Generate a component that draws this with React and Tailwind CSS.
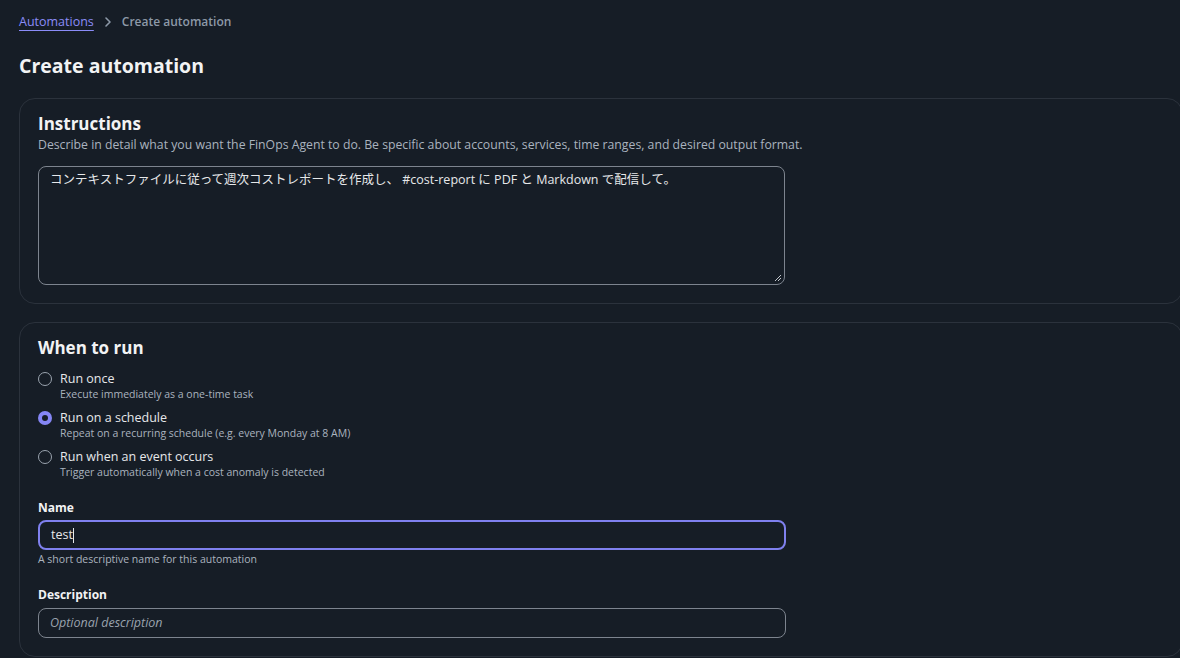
import React from "react";

function Radio({ checked, label, sub }) {
  return (
    <div className="flex items-start gap-[8px]">
      <div className="pt-[2px]">
        {checked ? (
          <div className="w-[14px] h-[14px] rounded-full bg-[#8586f5] flex items-center justify-center">
            <div className="w-[6px] h-[6px] rounded-full bg-[#161d26]" />
          </div>
        ) : (
          <div className="w-[14px] h-[14px] rounded-full border-[1.5px] border-[#9aa3ae]" />
        )}
      </div>
      <div className="flex flex-col">
        <span className="text-[12.5px] leading-[17px] text-[#e6e8ea]">{label}</span>
        <span className="text-[10.5px] leading-[14px] text-[#aab3bf]">{sub}</span>
      </div>
    </div>
  );
}

export default function App() {
  return (
    <div
      className="w-[1180px] h-[658px] overflow-hidden bg-[#161d26] text-[#e6e8ea]"
      style={{ fontFamily: '"Open Sans", "Noto Sans CJK JP", sans-serif' }}
    >
      <div className="pl-[19px] pt-[13px]">
        <div className="flex items-center gap-[7px] text-[12.5px] leading-[18px]">
          <span className="text-[#8b8cf8] underline underline-offset-[4px] decoration-[1px]">Automations</span>
          <svg width="14" height="14" viewBox="0 0 14 14">
            <path d="M5 3l4 4-4 4" fill="none" stroke="#8d99a8" strokeWidth="1.6" strokeLinecap="round" strokeLinejoin="round" />
          </svg>
          <span className="text-[12px] text-[#8d99a8] font-semibold">Create automation</span>
        </div>
        <h1 className="mt-[22px] text-[19.5px] leading-[26px] font-bold text-[#f2f3f4]">Create automation</h1>

        <div className="mt-[19px] w-[1164px] rounded-[16px] border border-[#2b323c] pl-[18px] pt-[14px] pb-[18px]">
          <h2 className="text-[17px] leading-[22px] font-bold text-[#f2f3f4]">Instructions</h2>
          <p className="mt-[1px] text-[12.25px] leading-[18px] text-[#aab3bf]">
            Describe in detail what you want the FinOps Agent to do. Be specific about accounts, services, time ranges, and desired output format.
          </p>
          <div className="mt-[12px] relative w-[747px] h-[119px] rounded-[8px] border border-[#7d848e] px-[11px] py-[4px]">
            <p className="text-[12.5px] leading-[18px] text-[#e6e8ea]">
              コンテキストファイルに従って週次コストレポートを作成し、 #cost-report に PDF と Markdown で配信して。
            </p>
            <svg width="8" height="8" viewBox="0 0 8 8" className="absolute right-[2px] bottom-[2px]">
              <path d="M1 7L7 1M4 7L7 4" stroke="#c0c4c9" strokeWidth="1" />
            </svg>
          </div>
        </div>

        <div className="mt-[18px] w-[1164px] rounded-[16px] border border-[#2b323c] pl-[18px] pt-[14px] pb-[18px]">
          <h2 className="text-[17px] leading-[22px] font-bold text-[#f2f3f4]">When to run</h2>
          <div className="mt-[11px] flex flex-col gap-[8px]">
            <Radio label="Run once" sub="Execute immediately as a one-time task" />
            <Radio checked label="Run on a schedule" sub="Repeat on a recurring schedule (e.g. every Monday at 8 AM)" />
            <Radio label="Run when an event occurs" sub="Trigger automatically when a cost anomaly is detected" />
          </div>

          <div className="mt-[21px] text-[12px] leading-[16px] font-bold text-[#f2f3f4]">Name</div>
          <div className="mt-[4px] w-[748px] h-[30px] rounded-[8px] border-2 border-[#7f80ee] flex items-center px-[11px]">
            <span className="text-[12.5px] text-[#e6e8ea]">test</span>
            <span className="w-[1px] h-[15px] bg-[#e6e8ea]" />
          </div>
          <div className="mt-[2px] text-[10.5px] leading-[14px] text-[#aab3bf]">A short descriptive name for this automation</div>

          <div className="mt-[21px] text-[12px] leading-[16px] font-bold text-[#f2f3f4]">Description</div>
          <div className="mt-[5px] w-[748px] h-[30px] rounded-[8px] border border-[#7d848e] flex items-center px-[11px]">
            <span className="text-[12.5px] italic text-[#9aa3ae]">Optional description</span>
          </div>
        </div>
      </div>
    </div>
  );
}
